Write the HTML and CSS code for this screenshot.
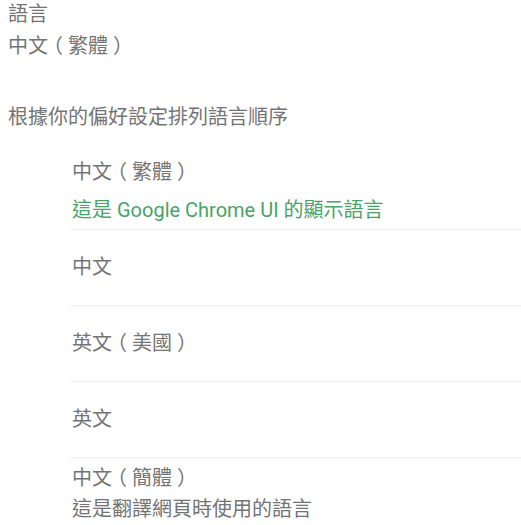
FILE: index.html
```html
<!DOCTYPE html>
<html lang="zh-Hant">

<head>
    <meta charset="UTF-8">
    <meta name="viewport" content="width=device-width, initial-scale=1.0">
    <title>語言</title>
    <link rel="stylesheet" href="styles.css">
</head>

<body>

    <!-- Current language -->
    <div class="summary">
        <div class="label">語言</div>
        <div class="value">中文<span class="paren">（</span>繁體<span class="paren">）</span></div>
    </div>

    <p class="intro">根據你的偏好設定排列語言順序</p>

    <!-- Language list -->
    <div class="languages">
        <div class="lang lang-first">
            <div class="lang-name">中文<span class="paren">（</span>繁體<span class="paren">）</span></div>
            <div class="lang-note ui">這是 Google Chrome UI 的顯示語言</div>
        </div>
        <div class="lang lang-single">中文</div>
        <div class="lang lang-single">英文<span class="paren">（</span>美國<span class="paren">）</span></div>
        <div class="lang lang-single">英文</div>
        <div class="lang lang-last">
            <div class="lang-name">中文<span class="paren">（</span>簡體<span class="paren">）</span></div>
            <div class="lang-note">這是翻譯網頁時使用的語言</div>
        </div>
    </div>

</body>

</html>
```

FILE: styles.css
```css
/* Page */
body {
    margin: 0;
    background-color: #ffffff;
    color: #747474;
    font-family: "Roboto", "Noto Sans CJK TC", sans-serif;
    font-size: 20px;
    overflow: hidden;
}

/* Centered brackets, as in the settings font */
.paren {
    font-feature-settings: "halt";
    padding: 0 5px;
}

/* Current language summary */
.summary {
    padding-left: 8px;
    line-height: 32px;
    margin-top: -2px;
}

.intro {
    margin: 39px 0 0;
    padding-left: 8px;
    line-height: 32px;
}

/* Language list */
.languages {
    margin-left: 70px;
    margin-top: 21px;
}

.lang {
    padding-left: 2px;
    border-bottom: 1px solid #ededed;
}

.lang-first .lang-name {
    line-height: 37px;
}

.lang-first .lang-note {
    line-height: 38px;
}

.lang-single {
    line-height: 75px;
}

.lang-last {
    border-bottom: none;
    padding-top: 4px;
}

.lang-last .lang-name {
    line-height: 32px;
}

.lang-last .lang-note {
    line-height: 30px;
}

/* Green note for the UI language */
.ui {
    color: #47a466;
}
```
